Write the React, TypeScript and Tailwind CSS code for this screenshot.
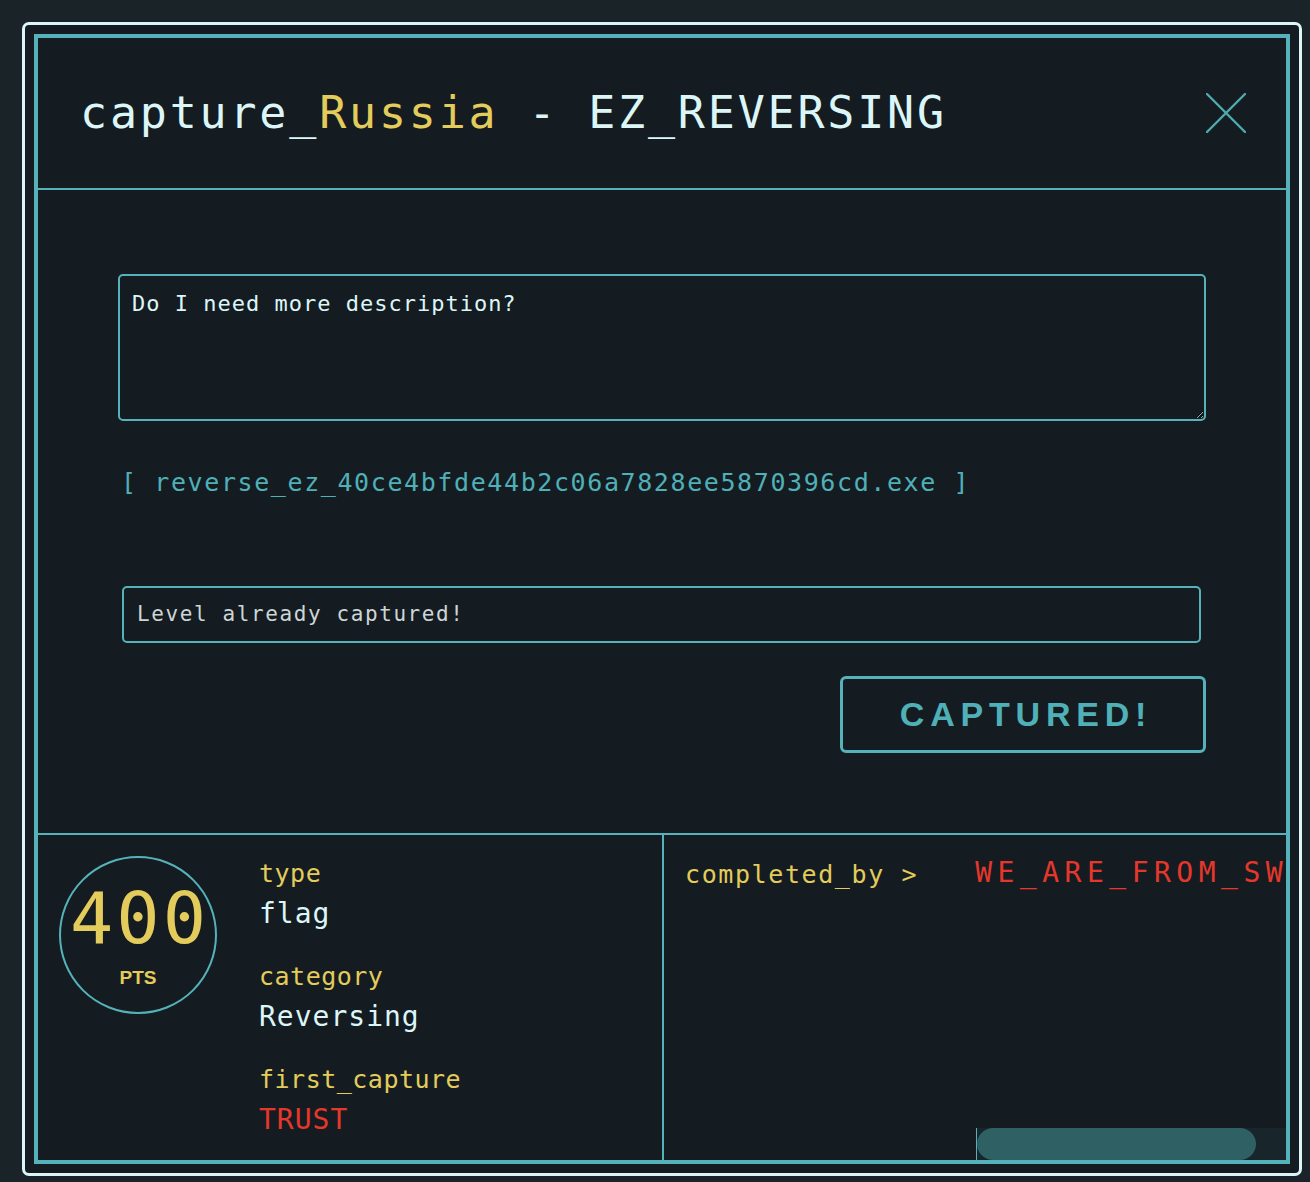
import React from "react";

function CloseIcon() {
  return (
    <svg width="40" height="40" viewBox="0 0 40 40" fill="none">
      <path d="M1 1L39 39M39 1L1 39" stroke="#4fa9ae" strokeWidth="2.4" strokeLinecap="round" />
    </svg>
  );
}

function Field({ label, value, red }: { label: string; value: string; red?: boolean }) {
  return (
    <div className="flex flex-col">
      <div className="h-[36px] leading-[36px] text-[25px] tracking-[0.5px] text-[#e3cc5b]">{label}</div>
      <div
        className={
          red
            ? "h-[44px] leading-[44px] text-[28px] tracking-[1px] text-[#e5372b]"
            : "h-[44px] leading-[44px] text-[28px] tracking-[1px] text-[#dcf6f8]"
        }
      >
        {value}
      </div>
    </div>
  );
}

export default function App() {
  return (
    <div className="min-h-screen w-full bg-[#1a2328] pt-[22px] pl-[22px] font-['DejaVu_Sans_Mono','Liberation_Mono',monospace]">
      <div className="w-[1280px] h-[1154px] border-[3px] border-[#dcf6f8] rounded-[7px] p-[9px] bg-[#151c21]">
        <div className="h-full border-4 border-[#55b2ba] flex flex-col">
          {/* header */}
          <div className="h-[152px] shrink-0 border-b-2 border-[#55b2ba] flex items-center justify-between pl-[42px] pr-[40px]">
            <h1 className="text-[45px] leading-[56px] tracking-[2.8px] text-[#dcf6f8] whitespace-nowrap">
              capture_<span className="text-[#e3cc5b]">Russia</span> - EZ_REVERSING
            </h1>
            <CloseIcon />
          </div>

          {/* body */}
          <div className="h-[643px] shrink-0 flex flex-col px-[80px] pt-[84px] pb-[80px]">
            <textarea
              readOnly
              defaultValue="Do I need more description?"
              className="h-[147px] w-full shrink-0 bg-transparent border-2 border-[#55b2ba] rounded-[5px] pl-[12px] pt-[13px] text-[22px] leading-[30px] tracking-[1px] text-[#dcf6f8] outline-none"
            />
            <div className="mt-[47px] h-[30px] leading-[30px] pl-[3px] text-[25px] tracking-[1.6px] text-[#4fb0b8] whitespace-nowrap">
              [ reverse_ez_40ce4bfde44b2c06a7828ee5870396cd.exe ]
            </div>
            <div className="mt-[88px] ml-[4px] mr-[5px] h-[57px] border-2 border-[#55b2ba] rounded-[5px] flex items-center pl-[13px] text-[21px] tracking-[1.6px] text-[#cdd6d6]">
              Level already captured!
            </div>
            <div className="mt-[33px] flex justify-end">
              <button className="w-[366px] h-[77px] border-[3px] border-[#55b2ba] rounded-[6px] flex items-center justify-center pl-[6px] font-['Liberation_Sans',Arial,sans-serif] font-bold text-[34px] tracking-[5.8px] text-[#4fb0b8]">
                CAPTURED!
              </button>
            </div>
          </div>

          {/* footer */}
          <div className="flex-1 min-h-0 border-t-2 border-[#55b2ba] flex">
            <div className="w-[626px] shrink-0 border-r-2 border-[#55b2ba] flex pl-[21px] pt-[21px]">
              <div className="w-[158px] h-[158px] shrink-0 rounded-full border-2 border-[#55b2ba] flex flex-col items-center pt-[24px]">
                <div className="text-[72px] leading-[72px] tracking-[3px] pl-[3px] text-[#e3cc5b]">400</div>
                <div className="mt-[12px] h-[24px] leading-[24px] font-['Liberation_Sans',Arial,sans-serif] font-bold text-[19px] text-[#e3cc5b]">
                  PTS
                </div>
              </div>
              <div className="ml-[42px] flex flex-col gap-[23px]">
                <Field label="type" value="flag" />
                <Field label="category" value="Reversing" />
                <Field label="first_capture" value="TRUST" red />
              </div>
            </div>

            <div className="flex-1 min-w-0 overflow-hidden flex flex-col">
              <div className="flex pt-[22px] pl-[21px]">
                <div className="shrink-0 h-[36px] leading-[36px] text-[25px] tracking-[1.6px] text-[#e3cc5b] whitespace-nowrap">
                  completed_by &gt;
                </div>
                <div className="ml-[57px] flex-1 min-w-0 overflow-hidden h-[36px] leading-[32px] text-[28px] tracking-[5.5px] text-[#e5372b] whitespace-nowrap">
                  WE_ARE_FROM_SW
                </div>
              </div>
              <div className="mt-auto ml-[312px] h-[32px] flex">
                <div className="w-px h-full bg-[#55b2ba]" />
                <div className="flex-1 h-full bg-[#18262b]">
                  <div className="w-[279px] h-full rounded-full bg-[#2e6064]" />
                </div>
              </div>
            </div>
          </div>
        </div>
      </div>
    </div>
  );
}
